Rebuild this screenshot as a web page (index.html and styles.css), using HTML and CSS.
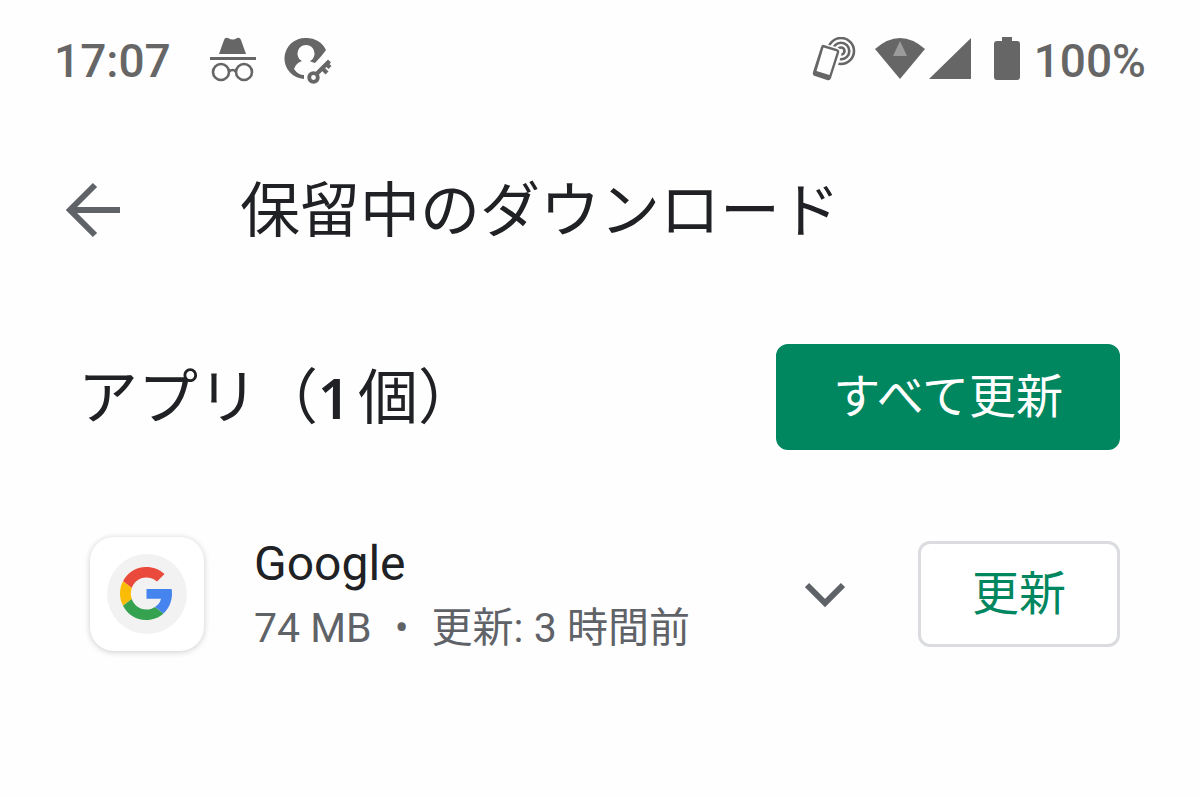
FILE: index.html
```html
<!DOCTYPE html>
<html lang="ja">
<head>
<meta charset="utf-8">
<meta name="viewport" content="width=device-width, initial-scale=1">
<title>保留中のダウンロード</title>
<link rel="stylesheet" href="styles.css">
</head>
<body>
<div class="status-bar">
  <time class="status-text">17:07</time>
  <div class="status-notices">
    <svg width="48" height="48" viewBox="0 0 48 48" aria-hidden="true">
      <path fill="currentColor" d="M10 17L15 3Q16 0 19 1Q24 4 28 1Q31 0 32 3L37 17ZM1 20H47V23H1Z"/>
      <g fill="none" stroke="currentColor" stroke-width="2.600"><circle cx="12" cy="35" r="8"/><circle cx="35" cy="35" r="8"/><path d="M20 34.500Q23.500 31.500 27 34.500"/></g>
    </svg>
    <svg width="48" height="48" viewBox="0 0 48 48" aria-hidden="true">
      <path fill="currentColor" fill-rule="evenodd" d="M22 1A20.500 20.500 0 0 1 42 13Q38 19 31 26Q27 25 26 24A8.500 8.500 0 1 0 18 24Q12 26 10 32Q14 38 20 38V42A20.500 20.500 0 0 1 22 1Z"/>
      <g fill="none" stroke="currentColor"><circle cx="29.500" cy="40.500" r="4.300" stroke-width="3.800"/><path stroke-width="4.200" d="M32 37.500L45.500 24M38 31L43 36M41.500 26L46 30.500"/></g>
    </svg>
  </div>
  <div class="status-signals">
    <svg class="nfc-icon" width="48" height="48" viewBox="0 0 48 48" aria-hidden="true">
      <g fill="none" stroke="currentColor" stroke-width="2.600"><circle cx="30" cy="14" r="13"/><circle cx="30" cy="14" r="8.300"/><circle cx="30" cy="14" r="3.500"/></g>
      <path fill="#fefefe" stroke="#fefefe" stroke-width="5" stroke-linejoin="round" d="M12 9L26 13Q28 14 28 17L20 42L3 38L11 10Z"/>
      <path fill="currentColor" fill-rule="evenodd" d="M13 8L26 12Q29 13 28 16L20 41Q19 44 16 43L4 39Q1 38 2 35L10 10Q11 7 13 8ZM12.500 10.500L5.500 34L18.500 38L26 14.500Z"/>
    </svg>
    <svg width="50" height="48" viewBox="0 0 50 48" aria-hidden="true">
      <path fill="currentColor" d="M0 12Q25 -10 50 12L25 42Z"/><path fill="#9b9b9b" d="M25 4L32 19H18Z"/>
    </svg>
    <svg class="cell-icon" width="42" height="48" viewBox="0 0 42 48" aria-hidden="true"><path fill="currentColor" d="M42 1V42H0Z"/></svg>
    <svg class="battery-icon" width="28" height="48" viewBox="0 0 28 48" aria-hidden="true"><path fill="currentColor" d="M9 0H19V4H24Q27 4 27 7V40Q27 43 24 43H4Q1 43 1 40V7Q1 4 4 4H9Z"/></svg>
    <span class="status-text battery-level">100%</span>
  </div>
</div>

<header class="app-bar">
  <button class="icon-button" type="button" aria-label="戻る">
    <svg width="56" height="56" viewBox="0 0 56 56" aria-hidden="true"><path fill="none" stroke="currentColor" stroke-width="6" d="M55 28H6M30 3L5 28L30 53"/></svg>
  </button>
  <h1 class="title">保留中のダウンロード</h1>
</header>

<main class="content">
  <section class="section-head">
    <h2 class="section-title">アプリ（<span class="count">1</span>個）</h2>
    <button class="button button-primary" type="button">すべて更新</button>
  </section>
  <article class="app-row">
    <div class="app-icon">
      <svg width="80" height="80" viewBox="0 0 80 80" role="img" aria-label="Google">
        <circle cx="40" cy="40" r="40" fill="#f2f2f2"/>
        <g transform="translate(13 13)">
          <path fill="#ea4a3c" d="M26 10.500C30.500 10.500 34 12 37 14.500L44.500 7C39.500 2.500 33.500 0 26 0C15.800 0 7.300 5.700 3 14.300L11.800 21C13.900 14.900 19.500 10.500 26 10.500Z"/>
          <path fill="#fbbc05" d="M11.800 21L3 14.300C1 17.800 0 22 0 26.500S1 35 3 38.700L11.800 32C10.500 28.300 10.500 24.700 11.800 21Z"/>
          <path fill="#34a24f" d="M3 38.700C7.300 47.300 15.800 53 26 53C33 53 39 50.700 43.500 46.500L35 39.900C32.600 41.500 29.600 42.500 26 42.500C19.500 42.500 13.900 38.100 11.800 32Z"/>
          <path fill="#4583ee" d="M26.500 22V31.700H41C40.200 35.200 38.200 38 35 39.900L43.500 46.500C49 41.500 52 34 52 26.500C52 24.900 51.900 23.400 51.600 22Z"/>
        </g>
      </svg>
    </div>
    <div class="app-info">
      <h3 class="app-name">Google</h3>
      <p class="app-meta"><span>74 MB</span><span class="dot">•</span><span>更新: 3 時間前</span></p>
    </div>
    <button class="icon-button" type="button" aria-label="詳細を表示">
      <svg width="40" height="40" viewBox="0 0 40 40" aria-hidden="true"><path fill="none" stroke="currentColor" stroke-width="6" d="M2 11L20 29L38 11"/></svg>
    </button>
    <button class="button button-outline" type="button">更新</button>
  </article>
</main>
</body>
</html>
```
FILE: styles.css
```css
* { box-sizing: border-box; }

body {
  margin: 0;
  background: #fefefe;
  color: #202124;
  font-family: Roboto, "Noto Sans CJK JP", sans-serif;
}

h1, h2, h3, p { margin: 0; font-weight: 400; }

button {
  margin: 0;
  font: inherit;
  cursor: pointer;
}

svg { display: block; }

.status-bar {
  display: flex;
  align-items: center;
  padding: 37px 54px 0;
  color: #666;
}

.status-text {
  font-size: 46px;
  font-weight: 500;
  line-height: 48px;
}

.status-notices {
  display: flex;
  gap: 27px;
  margin-left: 38px;
}

.status-signals {
  display: flex;
  align-items: center;
  margin-left: auto;
}

.nfc-icon { margin-right: 16px; }
.cell-icon { margin-left: 4px; }
.battery-icon { margin-left: 22px; }
.battery-level { margin-left: 13px; }

.app-bar {
  display: flex;
  align-items: center;
  gap: 119px;
  padding: 75px 65px 0;
}

.icon-button {
  padding: 0;
  border: 0;
  background: none;
  color: #5f6368;
}

.title,
.section-title {
  padding-bottom: 8px;
  font-family: "Noto Sans CJK JP", sans-serif;
  font-size: 60px;
  line-height: 92px;
}

.section-title { padding-bottom: 4px; }

.content { padding: 84px 80px 0 78px; }

.section-head {
  display: flex;
  align-items: center;
  justify-content: space-between;
}

.count {
  padding-right: 8px;
  font-family: "Noto Sans", sans-serif;
  font-size: 56px;
  font-weight: 600;
}

.button {
  height: 106px;
  padding: 0 54px 8px;
  border: 3px solid #01875f;
  border-radius: 12px;
  font-family: "Noto Sans CJK JP", sans-serif;
  font-size: 47px;
  line-height: 92px;
}

.button-primary {
  background: #01875f;
  color: #fff;
}

.button-outline {
  margin-left: 73px;
  padding: 0 51px 8px;
  border-color: #dadce0;
  background: #fff;
  color: #01875f;
}

.app-row {
  display: flex;
  align-items: center;
  margin-top: 78px;
}

.app-icon {
  display: grid;
  place-items: center;
  width: 114px;
  height: 114px;
  margin-left: 12px;
  border-radius: 24px;
  background: #fff;
  box-shadow: 0 1px 6px rgba(0, 0, 0, 0.2);
}

.app-info {
  flex: 1;
  padding-top: 4px;
  margin-left: 50px;
}

.app-name {
  font-size: 48px;
  line-height: 64px;
}

.app-meta {
  display: flex;
  color: #5f6368;
  font-size: 41px;
  line-height: 64px;
}

.dot {
  width: 60px;
  text-align: center;
}
```
